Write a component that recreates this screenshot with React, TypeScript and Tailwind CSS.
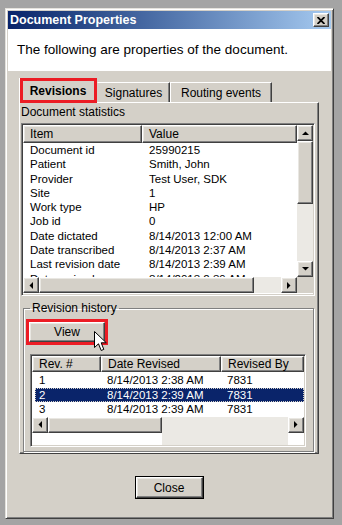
import React from 'react';

// win2000 style 3D borders
const raised =
  'border border-t-white border-l-white border-r-[#404040] border-b-[#404040] shadow-[inset_-1px_-1px_0_#808080,inset_1px_1px_0_#e9e7e2]';
const sunken =
  'border border-t-[#808080] border-l-[#808080] border-r-white border-b-white shadow-[inset_1px_1px_0_#404040,inset_-1px_-1px_0_#d4d0c8]';

const STATS: [string, string][] = [
  ['Document id', '25990215'],
  ['Patient', 'Smith, John'],
  ['Provider', 'Test User, SDK'],
  ['Site', '1'],
  ['Work type', 'HP'],
  ['Job id', '0'],
  ['Date dictated', '8/14/2013 12:00 AM'],
  ['Date transcribed', '8/14/2013 2:37 AM'],
  ['Last revision date', '8/14/2013 2:39 AM'],
  ['Date revised', '8/14/2013 2:39 AM'],
];

const REVISIONS = [
  { rev: '1', date: '8/14/2013 2:38 AM', by: '7831' },
  { rev: '2', date: '8/14/2013 2:39 AM', by: '7831', selected: true },
  { rev: '3', date: '8/14/2013 2:39 AM', by: '7831' },
];

type Dir = 'up' | 'down' | 'left' | 'right';

function Arrow({ dir }: { dir: Dir }) {
  const pts: Record<Dir, string> = {
    up: '0,4 7,4 3.5,0.5',
    down: '0,0 7,0 3.5,3.5',
    left: '4,0 4,7 0.5,3.5',
    right: '0,0 0,7 3.5,3.5',
  };
  const vertical = dir === 'up' || dir === 'down';
  return (
    <svg width={vertical ? 7 : 4} height={vertical ? 4 : 7} viewBox={vertical ? '0 0 7 4' : '0 0 4 7'}>
      <polygon points={pts[dir]} fill="#000" />
    </svg>
  );
}

function ScrollBtn({ dir }: { dir: Dir }) {
  return (
    <div className={`w-[16px] h-[16px] shrink-0 bg-[#d4d0c8] flex items-center justify-center ${raised}`}>
      <Arrow dir={dir} />
    </div>
  );
}

function HScroll({ thumb }: { thumb: number }) {
  return (
    <div className="flex h-[16px] flex-1">
      <ScrollBtn dir="left" />
      <div className={`h-[16px] bg-[#d4d0c8] shrink-0 ${raised}`} style={{ width: thumb }} />
      <div className="flex-1 bg-[#ebe9e4]" />
      <ScrollBtn dir="right" />
    </div>
  );
}

function HeaderCell({ label, className = '' }: { label: string; className?: string }) {
  return (
    <div className={`bg-[#d4d0c8] pl-[6px] truncate flex items-center text-[12px] ${raised} ${className}`}>{label}</div>
  );
}

function Cursor() {
  return (
    <svg className="absolute left-[65px] top-[9px]" width="13" height="21" viewBox="0 0 13 21">
      <path d="M0.5 0.5 L0.5 16.5 L4.5 12.8 L7.2 19.5 L9.8 18.4 L7.2 11.8 L12.3 11.8 Z" fill="#fff" stroke="#000" strokeWidth="1" strokeLinejoin="round" />
    </svg>
  );
}

export default function App() {
  return (
    <div className="h-[525px] w-[342px] bg-[#a4a4a4] pl-[5px] pr-[8px] pt-[8px] pb-[6px] font-['Liberation_Sans',Arial,sans-serif] text-[11.5px] text-black overflow-hidden">
      <div className="h-full flex flex-col bg-[#d4d0c8] p-[1px] border border-t-[#e4e2dc] border-l-[#e4e2dc] border-r-[#404040] border-b-[#404040] shadow-[inset_1px_1px_0_#fff,inset_-1px_-1px_0_#808080]">
        <div className="p-[1px] flex flex-col flex-1">
          {/* Title bar */}
          <div className="h-[18px] flex items-center justify-between bg-gradient-to-r from-[#0a246a] to-[#a6caf0] pl-[2px] pr-[2px]">
            <span className="text-white font-bold text-[12.5px]">Document Properties</span>
            <div className={`w-[16px] h-[14px] bg-[#d4d0c8] flex items-center justify-center ${raised}`}>
              <svg width="8" height="7" viewBox="0 0 8 7">
                <path d="M0.5 0 L7.5 7 M7.5 0 L0.5 7" stroke="#000" strokeWidth="1.8" />
              </svg>
            </div>
          </div>

          {/* Header */}
          <div className="h-[42px] bg-white flex items-center pl-[9px] text-[13.5px]">
            The following are properties of the document.
          </div>

          {/* Body */}
          <div className="flex-1 flex flex-col pl-[11px] pr-[12px] pt-[7px]">
            {/* Tabs */}
            <div className="flex items-end h-[24px] relative z-10">
              <div className="relative w-[78px] h-[25px] -mb-[1px] bg-[#d4d0c8] border border-b-0 border-t-white border-l-white border-r-[#404040] shadow-[inset_-1px_0_0_#808080] flex items-center justify-center font-bold text-[12px] pb-[1px]">
                Revisions
                <div className="absolute left-[0px] top-[-1px] w-[77px] h-[25px] border-[3px] border-[#ec1c24]" />
              </div>
              <div className="w-[73px] h-[20px] bg-[#d4d0c8] border border-b-0 border-t-white border-l-[#d4d0c8] border-r-[#404040] shadow-[inset_-1px_0_0_#808080] flex items-center justify-center text-[12px]">
                Signatures
              </div>
              <div className="w-[102px] h-[20px] bg-[#d4d0c8] border border-b-0 border-t-white border-l-white border-r-[#404040] shadow-[inset_-1px_0_0_#808080] flex items-center justify-center text-[12px]">
                Routing events
              </div>
            </div>

            {/* Tab panel */}
            <div className="h-[352px] border border-t-white border-l-white border-r-[#404040] border-b-[#404040] shadow-[inset_-1px_-1px_0_#808080] pl-[1px] pr-[3px] pt-[1px]">
              <div className="leading-[16px] text-[12px]">Document statistics</div>

              {/* Statistics list */}
              <div className={`mt-[3px] h-[173px] flex flex-col bg-white p-[1px] ${sunken}`}>
                <div className="flex h-[152px]">
                  <div className="flex-1 overflow-hidden">
                    <div className="flex h-[18px]">
                      <HeaderCell label="Item" className="w-[119px] shrink-0" />
                      <HeaderCell label="Value" className="flex-1" />
                    </div>
                    {STATS.map(([k, v]) => (
                      <div key={k} className="flex h-[14.3px] leading-[14.3px] whitespace-nowrap">
                        <span className="w-[119px] shrink-0 pl-[7px]">{k}</span>
                        <span className="pl-[7px]">{v}</span>
                      </div>
                    ))}
                  </div>
                  <div className="w-[16px] flex flex-col">
                    <ScrollBtn dir="up" />
                    <div className={`h-[63px] bg-[#d4d0c8] ${raised}`} />
                    <div className="flex-1 bg-[#ebe9e4]" />
                    <ScrollBtn dir="down" />
                  </div>
                </div>
                <div className="flex">
                  <HScroll thumb={215} />
                  <div className="w-[16px] h-[16px] bg-[#d4d0c8]" />
                </div>
              </div>

              {/* Revision history */}
              <fieldset className="mt-[5px] ml-[2px] mr-[1px] border border-[#808080] shadow-[inset_1px_1px_0_#fff,1px_1px_0_#fff] pb-[4px]">
                <legend className="ml-[6px] px-[2px] text-[12px] leading-[15px]">Revision history</legend>
                <div className="relative ml-[5px] mt-[6px] w-[76px]">
                  <div className={`h-[20px] bg-[#d4d0c8] flex items-center justify-center text-[12px] ${raised}`}>View</div>
                  <div className="absolute -left-[3px] -top-[3px] w-[82px] h-[26px] border-[3px] border-[#ec1c24]" />
                  <Cursor />
                </div>

                <div className={`mt-[12px] ml-[6px] w-[276px] h-[93px] flex flex-col bg-white p-[1px] ${sunken}`}>
                  <div className="flex h-[16px]">
                    <HeaderCell label="Rev. #" className="w-[69px] shrink-0 pl-[5px]" />
                    <HeaderCell label="Date Revised" className="w-[120px] shrink-0 pl-[5px]" />
                    <HeaderCell label="Revised By" className="flex-1 pl-[5px]" />
                  </div>
                  <div className="flex-1 pt-[1px]">
                    {REVISIONS.map((r) => (
                      <div
                        key={r.rev}
                        className={`flex ml-[3px] h-[14.5px] leading-[14.5px] whitespace-nowrap ${
                          r.selected ? 'bg-[#0a246a] text-white outline-1 outline-dotted outline-[#d4d0c8] -outline-offset-1' : ''
                        }`}
                      >
                        <span className="w-[66px] shrink-0 pl-[4px]">{r.rev}</span>
                        <span className="w-[120px] shrink-0 pl-[6px]">{r.date}</span>
                        <span className="pl-[6px]">{r.by}</span>
                      </div>
                    ))}
                  </div>
                  <HScroll thumb={114} />
                </div>
              </fieldset>
            </div>

            {/* Close */}
            <div className="flex justify-center mt-[22px]">
              <div className="w-[69px] h-[23px] border border-black">
                <div className={`h-full bg-[#d4d0c8] flex items-center justify-center text-[12px] ${raised}`}>Close</div>
              </div>
            </div>
          </div>
        </div>
      </div>
    </div>
  );
}
